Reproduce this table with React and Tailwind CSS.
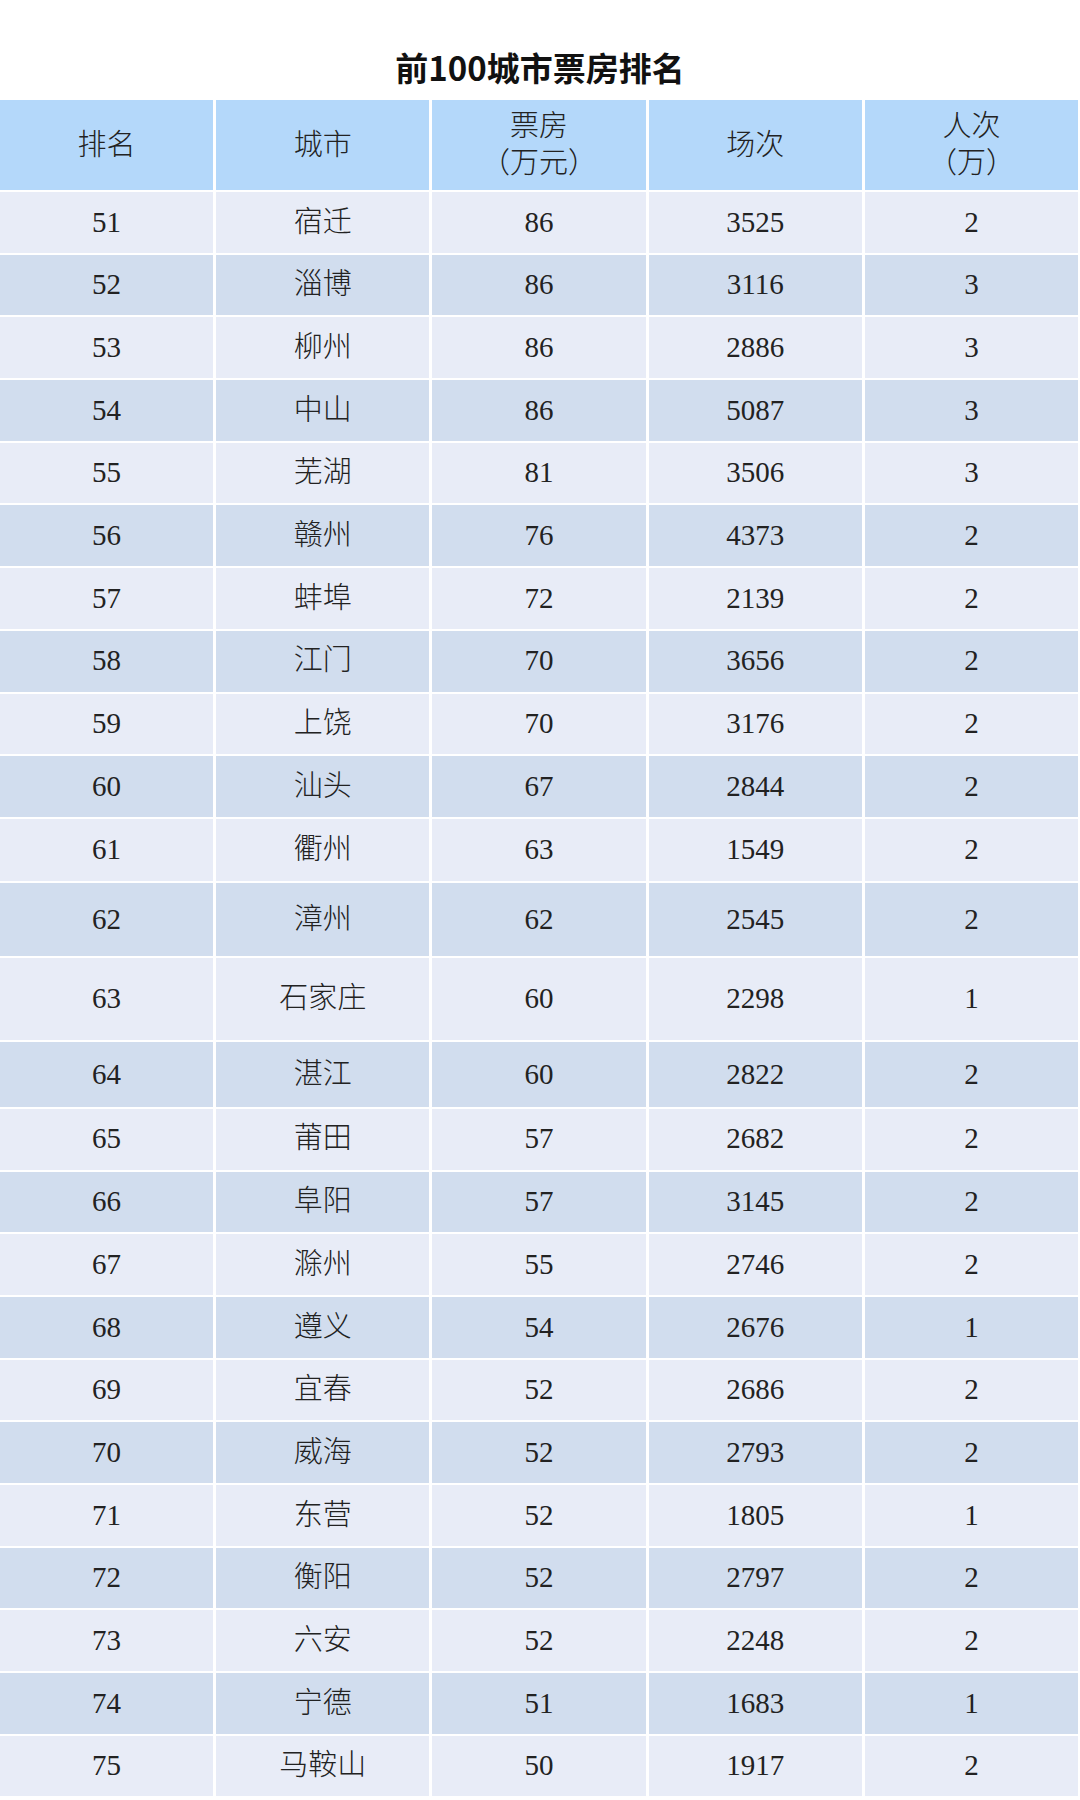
import React from "react";

const rows = [
  [51, "宿迁", 86, 3525, 2],
  [52, "淄博", 86, 3116, 3],
  [53, "柳州", 86, 2886, 3],
  [54, "中山", 86, 5087, 3],
  [55, "芜湖", 81, 3506, 3],
  [56, "赣州", 76, 4373, 2],
  [57, "蚌埠", 72, 2139, 2],
  [58, "江门", 70, 3656, 2],
  [59, "上饶", 70, 3176, 2],
  [60, "汕头", 67, 2844, 2],
  [61, "衢州", 63, 1549, 2],
  [62, "漳州", 62, 2545, 2],
  [63, "石家庄", 60, 2298, 1],
  [64, "湛江", 60, 2822, 2],
  [65, "莆田", 57, 2682, 2],
  [66, "阜阳", 57, 3145, 2],
  [67, "滁州", 55, 2746, 2],
  [68, "遵义", 54, 2676, 1],
  [69, "宜春", 52, 2686, 2],
  [70, "威海", 52, 2793, 2],
  [71, "东营", 52, 1805, 1],
  [72, "衡阳", 52, 2797, 2],
  [73, "六安", 52, 2248, 2],
  [74, "宁德", 51, 1683, 1],
  [75, "马鞍山", 50, 1917, 2],
];

// a few rows in the source image are taller than the rest
const heights = {
  61: "h-[62px]",
  62: "h-[73px]",
  63: "h-[82px]",
  64: "h-[65px]",
};

function HeadCell({ lines }) {
  return (
    <div className="flex flex-col items-center justify-center bg-[#b4d8fa] leading-[37px]">
      {lines.map((l) => (
        <span key={l}>{l}</span>
      ))}
    </div>
  );
}

function Row({ r }) {
  const h = heights[r[0]] || "h-[60.7px]";
  const bg = r[0] % 2 === 1 ? "bg-[#e8ecf7]" : "bg-[#d1ddee]";
  return (
    <div className={"grid grid-cols-5 gap-x-[3px] " + h}>
      {r.map((v, i) => (
        <div key={i} className={"flex items-center justify-center " + bg}>
          {v}
        </div>
      ))}
    </div>
  );
}

export default function App() {
  return (
    <div className="w-[1080px] h-[1800px] overflow-hidden bg-white">
      <div className="h-[100px] flex items-center justify-center pt-[36px]">
        <h1 className="text-[33px] font-bold text-[#111] font-['Noto_Sans_CJK_SC',sans-serif]">
          前100城市票房排名
        </h1>
      </div>
      <div className="w-[1078px] flex flex-col gap-y-[2px] text-[29px] font-light text-[#222] font-['Liberation_Serif','Noto_Sans_CJK_SC',serif]">
        <div className="grid grid-cols-5 gap-x-[3px] h-[90px]">
          <HeadCell lines={["排名"]} />
          <HeadCell lines={["城市"]} />
          <HeadCell lines={["票房", "（万元）"]} />
          <HeadCell lines={["场次"]} />
          <HeadCell lines={["人次", "（万）"]} />
        </div>
        {rows.map((r) => (
          <Row key={r[0]} r={r} />
        ))}
      </div>
    </div>
  );
}
